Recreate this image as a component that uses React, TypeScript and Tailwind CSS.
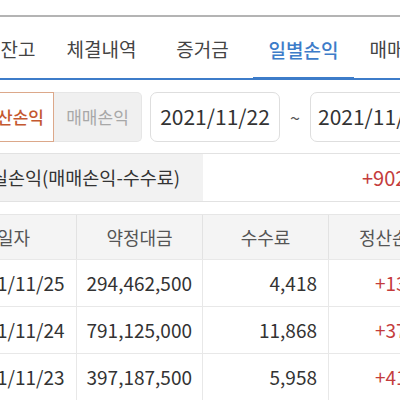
const TABS = ["주식잔고", "체결내역", "증거금", "일별손익", "매매손익"];

const ROWS = [
  { date: "2021/11/25", amount: "294,462,500", fee: "4,418", pnl: "+137,582" },
  { date: "2021/11/24", amount: "791,125,000", fee: "11,868", pnl: "+375,132" },
  { date: "2021/11/23", amount: "397,187,500", fee: "5,958", pnl: "+412,042" },
];

export default function App() {
  return (
    <div
      className="w-[400px] h-[400px] overflow-hidden bg-white text-[#333]"
      style={{ fontFamily: '"Noto Sans CJK KR", "Noto Sans", sans-serif' }}
    >
      {/* Top strip */}
      <div className="h-[15px] bg-white" />
      <div className="h-[2px] bg-[#b4b4b4]" />

      {/* Tabs */}
      <div className="flex h-[63px] border-b-2 border-[#3d7cc9] -ml-[50px] w-[560px]">
        {TABS.map((t) => {
          const active = t === "일별손익";
          return (
            <div
              key={t}
              className={
                active
                  ? "w-[101px] shrink-0 flex items-center justify-center text-[19px] text-[#3d7cc9] font-medium border-b-[3px] border-[#3d7cc9] -mb-[2px] pt-[6px]"
                  : "w-[101px] shrink-0 flex items-center justify-center text-[19px] text-[#444] pt-[4px]"
              }
            >
              {t}
            </div>
          );
        })}
      </div>

      {/* Filters */}
      <div className="flex items-center h-[73px] pt-[1px]">
        <div className="flex shrink-0 h-[50px] -ml-[30px]">
          <div className="w-[84px] shrink-0 border border-[#dca88a] bg-white flex items-center justify-end pr-[9px] text-[17px] text-[#c4582f] font-medium">
            정산손익
          </div>
          <div className="w-[88px] shrink-0 border border-l-0 border-[#e6e6e6] bg-[#f0f0f0] rounded-r-[5px] flex items-center justify-center text-[17px] text-[#a8a8a8]">
            매매손익
          </div>
        </div>
        <div className="ml-[8px] shrink-0 w-[130px] h-[50px] border border-[#dedede] rounded-[7px] flex items-center justify-center text-[21px] text-[#333]">
          2021/11/22
        </div>
        <div className="w-[30px] shrink-0 text-center text-[18px] text-[#555]">~</div>
        <div className="w-[130px] shrink-0 h-[50px] border border-[#dedede] rounded-[7px] flex items-center pl-[7px] whitespace-nowrap text-[21px] text-[#333]">
          2021/11/25
        </div>
      </div>

      {/* Summary */}
      <div className="flex h-[49px] border-y border-[#e2e2e2]">
        <div className="w-[203px] shrink-0 bg-[#f2f2f2] flex items-center overflow-hidden">
          <span className="-ml-[9px] whitespace-nowrap text-[18.5px] text-[#333]">
            실손익(매매손익-수수료)
          </span>
        </div>
        <div className="flex-1 flex items-center pl-[159px] whitespace-nowrap text-[20px] text-[#c43c3c]">
          +902,756
        </div>
      </div>

      {/* Table */}
      <div className="mt-[12px] -ml-[49px] w-[504px]">
        <div className="grid grid-cols-[126px_126px_126px_126px] h-[45px] bg-[#f4f4f4] border-t border-[#e6e6e6] text-[18px] text-[#555]">
          <div className="flex items-center justify-center border-r border-[#e2e2e2]">일자</div>
          <div className="flex items-center justify-center border-r border-[#e2e2e2]">약정대금</div>
          <div className="flex items-center justify-center border-r border-[#e2e2e2]">수수료</div>
          <div className="flex items-center justify-center">정산손익</div>
        </div>
        {ROWS.map((r) => (
          <div
            key={r.date}
            className="grid grid-cols-[126px_126px_126px_126px] h-[47px] border-t border-[#e8e8e8] text-[19px] text-[#333]"
          >
            <div className="flex items-center justify-center border-r border-[#e8e8e8] pl-[3px]">{r.date}</div>
            <div className="flex items-center justify-end pr-[10px] border-r border-[#e8e8e8]">{r.amount}</div>
            <div className="flex items-center justify-end pr-[11px] border-r border-[#e8e8e8]">{r.fee}</div>
            <div className="flex items-center pl-[46px] text-[#c43c3c]">{r.pnl}</div>
          </div>
        ))}
      </div>
    </div>
  );
}
